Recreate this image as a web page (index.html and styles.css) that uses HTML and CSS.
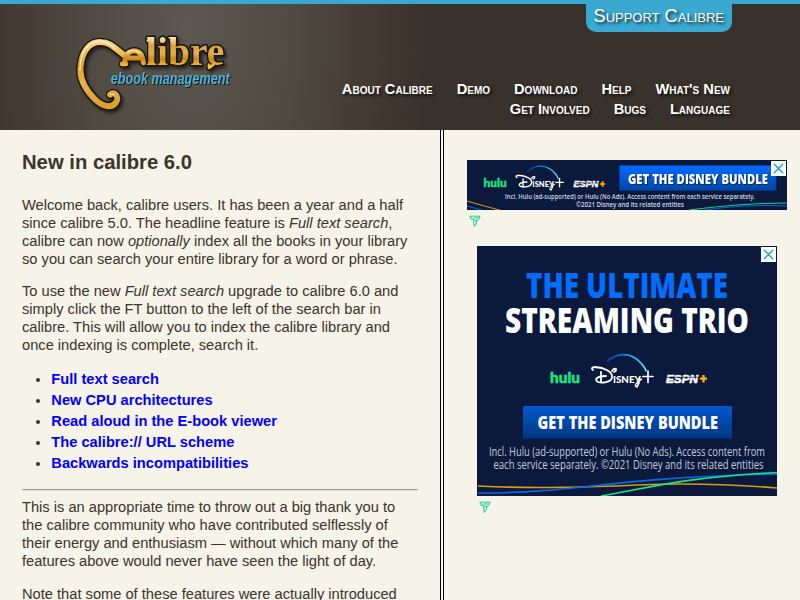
FILE: index.html
```html
<!DOCTYPE html>
<html lang="en">
<head>
<meta charset="utf-8">
<title>calibre - New in calibre 6.0</title>
<link rel="stylesheet" href="styles.css">
</head>
<body>
<svg class="defs" width="0" height="0" aria-hidden="true">
  <defs>
    <linearGradient id="arc"><stop offset="0" stop-color="#0b3fa0"/><stop offset=".4" stop-color="#0878d8"/><stop offset="1" stop-color="#4feaff"/></linearGradient>
    <linearGradient id="button" x2="0" y2="1"><stop offset="0" stop-color="#0059d0"/><stop offset="1" stop-color="#02367f"/></linearGradient>
    <linearGradient id="brightButton" x2="0" y2="1"><stop offset="0" stop-color="#006cff"/><stop offset="1" stop-color="#0145a5"/></linearGradient>
    <g id="brands">
      <text x="0" y="32.5" class="hulu" textLength="30" lengthAdjust="spacingAndGlyphs">hulu</text>
      <path d="M57 11.5C64 3.5 76 2 85 7.5Q93 13 96.5 21" fill="none" stroke="url(#arc)" stroke-width="1.7"/>
      <g fill="none" stroke="#fff" stroke-width="1.8" stroke-linecap="round">
        <path d="M43 19.5Q40 17 45 16.5C54 17 63 21 62 27C61 32 52 33 48 31.5C44 29 46 26 56 25.5M51 21.5V31.5M62 20.5Q63.5 17.5 66 18.5Q66.5 20.5 64 21.5"/>
        <path d="M98 20.5V32M93 26H103" stroke-width="1.7"/>
        <path d="M89.5 27Q90 32 87 36.5Q84.5 36 86 33.5L91.5 28.5" stroke-width="1.4"/>
      </g>
      <text x="63" y="32" class="disney" textLength="28" lengthAdjust="spacingAndGlyphs">isney</text>
      <text x="116" y="32.5" class="espn" textLength="32" lengthAdjust="spacingAndGlyphs">ESPN</text>
      <path d="M117 26.8H149" stroke="#0b1a3c" stroke-width=".7"/>
      <path d="M153.5 24.5V32M150 28.2H157" stroke="#ffb000" stroke-width="2.3"/>
    </g>
    <g id="close"><rect width="15" height="15" fill="#fff"/><path d="M3.3 3.3L11.7 11.7M11.7 3.3L3.3 11.7" stroke="#18a8c4" stroke-width="1.4" stroke-linecap="round"/></g>
    <g id="mark"><path d="M.8 1.2H11L10.3 3.5Q9.5 5.4 7.8 5.6Q8 9 5.2 11.5L4.6 6L5 4.2H2ZM5 3H9.5M5.5 5.5H8" fill="#dcf3e2" stroke="#1fcf91" stroke-width="1" stroke-linejoin="round"/></g>
  </defs>
</svg>
<header class="header">
  <svg class="logo" viewBox="0 0 570 330" role="img" aria-label="calibre ebook management">
    <defs>
      <linearGradient id="gold" x2="0" y2="1"><stop offset="0" stop-color="#f8d48b"/><stop offset=".35" stop-color="#dea12a"/><stop offset=".65" stop-color="#eab14a"/><stop offset="1" stop-color="#dca02d"/></linearGradient>
      <linearGradient id="goldText" gradientUnits="userSpaceOnUse" x1="0" y1="50" x2="0" y2="140"><stop offset="0" stop-color="#ffe9bd"/><stop offset=".3" stop-color="#dca13a"/><stop offset=".55" stop-color="#e3b050"/><stop offset=".75" stop-color="#c98918"/><stop offset="1" stop-color="#ffc43a"/></linearGradient>
      <path id="swash" d="M150 224C162 211 180 231 168 247C156 266 128 260 106 239C76 209 57 176 62 139C66 91 91 64 123 66C151 67 165 86 191 104"/>
      <path id="arch" d="M187 131H197M194 127Q196 94 222 92Q247 92 250 128M205 114H240"/>
      <path id="flags" d="M263 62L269 56V129M304 64L309 58M334 62L340 56M447 134V144L460 134"/>
    </defs>
    <g class="wordmark">
      <g class="outline"><use href="#swash" stroke-width="26"/><use href="#arch" stroke-width="22"/><use href="#flags" stroke-width="16"/></g>
      <text x="258" y="136" class="goldletters" textLength="235" lengthAdjust="spacingAndGlyphs">libre</text>
      <g class="goldstroke"><use href="#swash" stroke="url(#gold)" stroke-width="18"/><use href="#arch" stroke="url(#goldText)" stroke-width="15"/><use href="#flags" stroke="url(#goldText)" stroke-width="8"/></g>
      <g class="shine"><path d="M60 150C59 101 82 66 117 63C139 62 154 75 166 86"/><path d="M151 223L162 224M202 98Q220 84 238 98"/></g>
    </g>
    <text x="152" y="191" class="tagline" textLength="357" lengthAdjust="spacingAndGlyphs">ebook management</text>
  </svg>
  <div class="header-side">
    <a class="support">Support Calibre</a>
    <nav class="nav">
      <div class="nav-row"><a>About Calibre</a><a>Demo</a><a>Download</a><a>Help</a><a>What's New</a></div>
      <div class="nav-row"><a>Get Involved</a><a>Bugs</a><a>Language</a></div>
    </nav>
  </div>
</header>
<div class="page">
  <main class="content">
    <h1>New in calibre 6.0</h1>
    <p class="intro">Welcome back, calibre users. It has been a year and a half since calibre 5.0. The headline feature is <i>Full text search</i>, calibre can now <i>optionally</i> index all the books in your library so you can search your entire library for a word or phrase.</p>
    <p>To use the new <i>Full text search</i> upgrade to calibre 6.0 and simply click the FT button to the left of the search bar in calibre. This will allow you to index the calibre library and once indexing is complete, search it.</p>
    <ul>
      <li><a>Full text search</a></li>
      <li><a>New CPU architectures</a></li>
      <li><a>Read aloud in the E-book viewer</a></li>
      <li><a>The calibre:// URL scheme</a></li>
      <li><a>Backwards incompatibilities</a></li>
    </ul>
    <hr>
    <p>This is an appropriate time to throw out a big thank you to the calibre community who have contributed selflessly of their energy and enthusiasm — without which many of the features above would never have seen the light of day.</p>
    <p>Note that some of these features were actually introduced</p>
  </main>
  <aside class="ads">
    <svg class="banner" viewBox="0 0 320 50">
      <rect width="320" height="50" fill="#0b1a3c"/>
      <g fill="none"><path d="M0 41Q17 46 36 51" stroke="#d99a1c"/><path d="M0 46L18 51" stroke="#0a62e8"/><path d="M238 50Q277 44 320 46" stroke="#0a62e8"/><path d="M222 50Q275 43 320 43" stroke="#18d17c"/></g>
      <use href="#brands" transform="translate(16.5 3) scale(.776 .745)"/>
      <rect x="152.5" y="5.5" width="156.5" height="25" fill="url(#brightButton)" stroke="#053a91" stroke-width=".7"/>
      <text x="161" y="24.3" class="cta cta-shadow" font-size="14.2" textLength="140" lengthAdjust="spacingAndGlyphs">GET THE DISNEY BUNDLE</text>
      <g class="legal legal-small"><text x="38" y="39.3" textLength="250" lengthAdjust="spacingAndGlyphs">Incl. Hulu (ad-supported) or Hulu (No Ads). Access content from each service separately.</text><text x="109" y="47.2" textLength="108" lengthAdjust="spacingAndGlyphs">©2021 Disney and its related entities</text></g>
      <use href="#close" x="304" y="1"/>
    </svg>
    <svg class="mark" viewBox="0 0 12 13"><use href="#mark"/></svg>
    <svg class="square" viewBox="0 0 300 250">
      <rect width="300" height="250" fill="#0b1a3c"/>
      <g class="headline"><text x="49" y="52" fill="#006eff" textLength="202" lengthAdjust="spacingAndGlyphs">THE ULTIMATE</text><text x="28" y="87" fill="#fff" textLength="244" lengthAdjust="spacingAndGlyphs">STREAMING TRIO</text></g>
      <use href="#brands" x="73" y="104.5"/>
      <rect x="46" y="160" width="209" height="32.5" fill="url(#button)"/>
      <text x="60.5" y="183" class="cta" font-size="18.2" textLength="180.5" lengthAdjust="spacingAndGlyphs">GET THE DISNEY BUNDLE</text>
      <g class="legal" font-size="12.2"><text x="12" y="210" textLength="276" lengthAdjust="spacingAndGlyphs">Incl. Hulu (ad-supported) or Hulu (No Ads). Access content from</text><text x="16.5" y="223" textLength="270" lengthAdjust="spacingAndGlyphs">each service separately. ©2021 Disney and its related entities</text></g>
      <g fill="none" stroke-width="1.6"><path d="M1 240C65 243 115 241 161 239S250 238 300 242" stroke="#d99a0c"/><path d="M1 247C105 247 123 232 300 228" stroke="#0868ed"/><path d="M124 250C171 242 208 231 300 226.5" stroke="#1de584"/></g>
      <use href="#close" x="284" y="1"/>
    </svg>
    <svg class="mark mark-inset" viewBox="0 0 12 13"><use href="#mark"/></svg>
  </aside>
</div>
</body>
</html>
```

FILE: styles.css
```css
* { box-sizing: border-box; }
html, body { height: 100%; }
body {
  margin: 0;
  overflow: hidden;
  background: #f6f3e8;
  color: #3b342b;
  font: 14.667px/18px "Liberation Sans", sans-serif;
}
.defs { position: absolute; }
.header {
  height: 130px;
  display: flex;
  justify-content: space-between;
  padding-left: 60px;
  border-top: 4px solid #39a9d1;
  background: radial-gradient(ellipse 240px 430px at 190px 24px, #5c5750 0, #514b44 40%, #443a34 75%, #39312b 100%) #39312b;
}
.logo { width: 190px; height: 110px; margin-top: 16px; }
.wordmark { filter: drop-shadow(6px 8px 5px rgba(0, 0, 0, .55)); }
.outline, .goldstroke, .shine { fill: none; stroke-linecap: round; stroke-linejoin: round; }
.outline { stroke: #17130f; }
.shine { stroke: #fff4cd; stroke-width: 4px; opacity: .85; }
.goldletters {
  font: bold 120px "Liberation Serif", serif;
  fill: url(#goldText);
  stroke: #17130f;
  stroke-width: 9px;
  stroke-linejoin: round;
  paint-order: stroke;
}
.tagline {
  font: italic bold 47px "Liberation Sans Narrow", "Liberation Sans", sans-serif;
  fill: #4bb0d5;
  filter: drop-shadow(3px 3px 1px #1b1918);
}
.header-side { display: flex; flex-direction: column; align-items: flex-end; padding-right: 68px; }
.support {
  height: 28px;
  padding: 0 8px;
  border-radius: 0 0 10px 10px;
  background: #39a9d1;
  color: #fff;
  font-size: 18.2px;
  line-height: 25px;
  font-variant: small-caps;
  text-shadow: 2px 2px 3px #222;
}
.nav { padding: 47px 2px 0 0; }
.nav-row {
  display: flex;
  justify-content: flex-end;
  gap: 24px;
  color: #fff;
  font-size: 14.667px;
  font-weight: bold;
  line-height: 20px;
  font-variant: small-caps;
  text-shadow: 2px 2px 3px #111;
}
.page { display: flex; height: 470px; }
.content { width: 444px; padding: 20px 22px 0; border-right: 4px double #000; overflow: hidden; }
h1 { margin: 0 0 22px; font-size: 20.25px; line-height: 24px; }
p { margin: 0 0 15px; }
.intro { margin-bottom: 14px; }
ul { margin: 0 0 15px; padding-left: 29.333px; }
li { line-height: 21px; }
li a { color: #00f; font-weight: bold; }
hr { margin: 0 0 7px; border: 0; border-top: 1px solid #9a9a9a; border-bottom: 1px solid #e4e2da; height: 2px; }
.ads { flex: 1; padding: 30px 0 0 23px; display: flex; flex-direction: column; align-items: flex-start; }
.banner { width: 320px; height: 50px; }
.mark { width: 12px; height: 13px; margin: 5px 0 0 2px; }
.square { width: 300px; height: 250px; margin: 18px 0 0 10px; }
.mark-inset { margin-left: 12px; }
.hulu { font: 900 15px Lato, sans-serif; fill: #1ce783; stroke: #1ce783; stroke-width: .4px; }
.disney { font: 900 14px Lato, sans-serif; font-variant: small-caps; fill: #fff; }
.espn { font: italic 900 11.5px "Liberation Sans", sans-serif; fill: #fff; stroke: #fff; stroke-width: .6px; }
.cta, .headline { font-family: "Open Sans", sans-serif; font-weight: 800; fill: #fff; }
.headline { font-size: 35px; }
.cta-shadow { filter: drop-shadow(1px 1px 0 #052b63); }
.legal { font-family: "Open Sans", sans-serif; fill: #c4cad8; }
.legal-small { font-size: 7.8px; font-weight: 600; fill: #d3d8e4; }
```
